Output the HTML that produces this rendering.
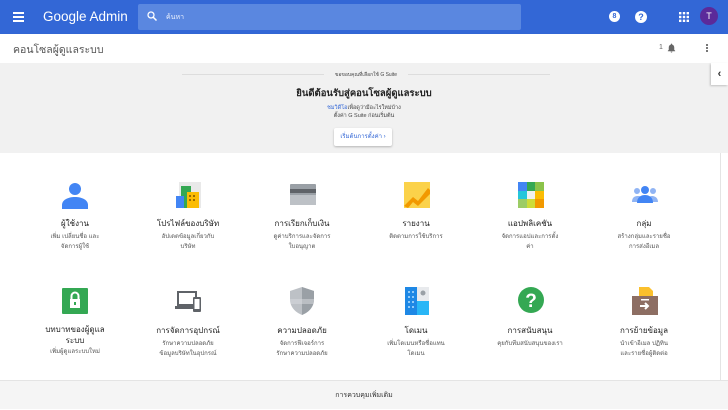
<!DOCTYPE html>
<html><head><meta charset="utf-8"><style>
*{margin:0;padding:0;box-sizing:border-box}
body{width:728px;height:409px;overflow:hidden;background:#fff;font-family:"Liberation Sans",sans-serif;position:relative;color:#333}
.abs{position:absolute}
.hdr{left:0;top:0;width:728px;height:34px;background:#3367d6}
.search{left:138px;top:4px;width:383px;height:26px;background:#5a87e0;border-radius:2px}
.sub{left:0;top:34px;width:728px;height:29px;background:#fff;box-shadow:0 1px 2px rgba(0,0,0,.15)}
.banner{left:0;top:63px;width:728px;height:90px;background:#f1f1f1}
.foot{left:0;top:380px;width:728px;height:29px;background:#f5f5f5;border-top:1px solid #e4e4e4;text-align:center;font-size:7px;line-height:29px;color:#333}
.item{position:absolute;width:110px;text-align:center}
.item .t{font-size:8px;color:#222;margin-top:0}
.item .d{font-size:6px;color:#555;line-height:10px;margin-top:2px;padding:0 26px}
.ic{position:absolute}
</style></head><body>
<div class="abs hdr"></div>
<div class="abs" style="left:13px;top:12px;width:11px;height:2px;background:#fff;box-shadow:0 4px 0 #fff,0 8px 0 #fff"></div>
<div class="abs" style="left:43px;top:9px;color:#fff;font-size:13.5px">Google Admin</div>
<div class="abs search"></div>
<svg class="abs" style="left:146px;top:10px" width="12" height="12" viewBox="0 0 24 24"><circle cx="10" cy="10" r="6" fill="none" stroke="#fff" stroke-width="2.5"/><path d="M14.5 14.5L21 21" stroke="#fff" stroke-width="3"/></svg>
<div class="abs" style="left:166px;top:12px;color:#e8eefc;font-size:7px">ค้นหา</div>
<div class="abs" style="left:609px;top:11px;width:11px;height:11px;border-radius:50%;background:#fff;color:#3367d6;font-size:7px;text-align:center;line-height:11px;font-weight:bold">8</div>
<div class="abs" style="left:635px;top:11px;width:12px;height:12px;border-radius:50%;background:#fff;color:#3367d6;font-size:9px;text-align:center;line-height:12px;font-weight:bold">?</div>
<svg class="abs" style="left:679px;top:12px" width="10" height="10"><g fill="#fff"><rect x="0" y="0" width="2.4" height="2.4"/><rect x="3.8" y="0" width="2.4" height="2.4"/><rect x="7.6" y="0" width="2.4" height="2.4"/><rect x="0" y="3.8" width="2.4" height="2.4"/><rect x="3.8" y="3.8" width="2.4" height="2.4"/><rect x="7.6" y="3.8" width="2.4" height="2.4"/><rect x="0" y="7.6" width="2.4" height="2.4"/><rect x="3.8" y="7.6" width="2.4" height="2.4"/><rect x="7.6" y="7.6" width="2.4" height="2.4"/></g></svg>
<div class="abs" style="left:700px;top:7px;width:18px;height:18px;border-radius:50%;background:#5b2a9a;color:#fff;font-size:9px;text-align:center;line-height:18px">T</div>
<div class="abs sub"></div>
<div class="abs" style="left:13px;top:41px;font-size:10.5px;color:#555">คอนโซลผู้ดูแลระบบ</div>
<div class="abs" style="left:659px;top:44px;font-size:7px;color:#666">1</div>
<svg class="abs" style="left:666px;top:42px" width="11" height="12" viewBox="0 0 24 24"><path d="M12 22a2 2 0 0 0 2-2h-4a2 2 0 0 0 2 2zm6-6V11c0-3-1.6-5.6-4.5-6.3V4a1.5 1.5 0 0 0-3 0v.7C7.6 5.4 6 8 6 11v5l-2 2v1h16v-1z" fill="#666"/></svg>
<div class="abs" style="left:706px;top:44px;width:2px;height:2px;background:#777;box-shadow:0 3px 0 #777,0 6px 0 #777"></div>
<div class="abs banner"></div>
<div class="abs" style="left:182px;top:74px;width:142px;height:1px;background:#ddd"></div>
<div class="abs" style="left:408px;top:74px;width:142px;height:1px;background:#ddd"></div>
<div class="abs" style="left:324px;top:71px;width:84px;text-align:center;font-size:5px;color:#444">ขอขอบคุณที่เลือกใช้ G Suite</div>
<div class="abs" style="left:214px;top:86px;width:300px;text-align:center;font-size:9.5px;color:#222;font-weight:bold">ยินดีต้อนรับสู่คอนโซลผู้ดูแลระบบ</div>
<div class="abs" style="left:214px;top:104px;width:300px;text-align:center;font-size:5.5px;color:#444;line-height:8px"><span style="color:#3367d6">ชมวิดีโอ</span>เพื่อดูว่ามีอะไรใหม่บ้าง<br>ตั้งค่า G Suite ก่อนเริ่มต้น</div>
<div class="abs" style="left:334px;top:128px;width:58px;height:18px;background:#fff;box-shadow:0 1px 2px rgba(0,0,0,.25);border-radius:2px;text-align:center;font-size:6px;line-height:18px;color:#3367d6">เริ่มต้นการตั้งค่า ›</div>
<div class="abs" style="left:711px;top:63px;width:17px;height:22px;background:#fff;box-shadow:-1px 1px 2px rgba(0,0,0,.2);font-size:11px;font-weight:bold;text-align:center;line-height:22px;color:#333">‹</div>
<div class="abs" style="left:720px;top:153px;width:1px;height:227px;background:#e4e4e4"></div>

<svg class="ic" style="left:61px;top:181px" width="28" height="28"><circle cx="14" cy="8" r="6" fill="#4285f4"/><path d="M1 28v-4c0-5 6-8 13-8s13 3 13 8v4z" fill="#4285f4"/></svg>
<svg class="ic" style="left:175px;top:182px" width="27" height="26"><rect x="4" y="0" width="22" height="26" fill="#e9e9e9"/><rect x="6" y="4" width="10" height="22" fill="#34a853"/><rect x="1" y="14" width="8" height="12" fill="#4285f4"/><rect x="12" y="10" width="12" height="16" fill="#fbbc04"/><g fill="#9a6a00"><rect x="14" y="13" width="2" height="2"/><rect x="18" y="13" width="2" height="2"/><rect x="14" y="17" width="2" height="2"/><rect x="18" y="17" width="2" height="2"/></g></svg>
<svg class="ic" style="left:290px;top:184px" width="26" height="22"><rect x="0" y="0" width="26" height="21" fill="#9aa0a6" rx="1"/><rect x="0" y="5" width="26" height="4" fill="#5f6368"/><rect x="0" y="11" width="26" height="10" fill="#bdc1c6"/></svg>
<svg class="ic" style="left:404px;top:182px" width="26" height="26"><rect width="26" height="26" fill="#fbd24a"/><path d="M0 24L9 15l5 4L24 6l2 2v4L14 24l-5-4-5 6z" fill="#f29900"/></svg>
<svg class="ic" style="left:518px;top:182px" width="26" height="26"><rect x="0" y="0" width="9" height="9" fill="#4285f4"/><rect x="9" y="0" width="8" height="9" fill="#34a853"/><rect x="17" y="0" width="9" height="9" fill="#8bc34a"/><rect x="0" y="9" width="9" height="8" fill="#26c6da"/><rect x="9" y="9" width="8" height="8" fill="#f1f1f1"/><rect x="17" y="9" width="9" height="8" fill="#fbbc04"/><rect x="0" y="17" width="9" height="9" fill="#9ccc65"/><rect x="9" y="17" width="8" height="9" fill="#cddc39"/><rect x="17" y="17" width="9" height="9" fill="#f29900"/></svg>
<svg class="ic" style="left:632px;top:185px" width="26" height="18"><circle cx="5" cy="6" r="3" fill="#90b4f4"/><circle cx="21" cy="6" r="3" fill="#90b4f4"/><path d="M0 17c0-5 3-6 6-6s5 1 5 6zM15 17c0-5 3-6 5-6s6 1 6 6z" fill="#90b4f4"/><circle cx="13" cy="5" r="4" fill="#4285f4"/><path d="M5 18c0-6 4-8 8-8s8 2 8 8z" fill="#4285f4"/></svg>

<div class="item" style="left:20px;top:217px"><div class="t">ผู้ใช้งาน</div><div class="d">เพิ่ม เปลี่ยนชื่อ และจัดการผู้ใช้</div></div>
<div class="item" style="left:133px;top:217px"><div class="t">โปรไฟล์ของบริษัท</div><div class="d">อัปเดตข้อมูลเกี่ยวกับบริษัท</div></div>
<div class="item" style="left:247px;top:217px"><div class="t">การเรียกเก็บเงิน</div><div class="d">ดูค่าบริการและจัดการใบอนุญาต</div></div>
<div class="item" style="left:361px;top:217px"><div class="t">รายงาน</div><div class="d">ติดตามการใช้บริการ</div></div>
<div class="item" style="left:475px;top:217px"><div class="t">แอปพลิเคชัน</div><div class="d">จัดการแอปและการตั้งค่า</div></div>
<div class="item" style="left:589px;top:217px"><div class="t">กลุ่ม</div><div class="d">สร้างกลุ่มและรายชื่อการส่งอีเมล</div></div>

<svg class="ic" style="left:62px;top:288px" width="26" height="26"><rect width="26" height="26" rx="1" fill="#34a853"/><rect x="8" y="11" width="10" height="9" fill="#fff"/><path d="M9.5 11V8a3.5 3.5 0 0 1 7 0v3" fill="none" stroke="#fff" stroke-width="2"/><rect x="12" y="14" width="2" height="3" fill="#34a853"/></svg>
<svg class="ic" style="left:175px;top:291px" width="28" height="22"><rect x="2" y="0" width="20" height="15" fill="#5f6368"/><rect x="4" y="2" width="16" height="11" fill="#fff"/><rect x="0" y="15" width="22" height="3" fill="#5f6368"/><rect x="18" y="6" width="8" height="15" rx="1" fill="#5f6368"/><rect x="19.5" y="8" width="5" height="10" fill="#fff"/></svg>
<svg class="ic" style="left:290px;top:287px" width="24" height="28"><path d="M12 0L0 4v8c0 8 5 13 12 16 7-3 12-8 12-16V4z" fill="#bdc1c6"/><path d="M12 0v28c7-3 12-8 12-16V4z" fill="#9aa0a6"/><path d="M0 12h24c0 2-.3 4-1 5H1c-.7-1-1-3-1-5z" fill="#dadce0" opacity=".5"/></svg>
<svg class="ic" style="left:405px;top:287px" width="24" height="28"><rect width="24" height="28" fill="#1e88e5"/><rect x="12" y="0" width="12" height="28" fill="#e8eaed"/><rect x="12" y="14" width="12" height="14" fill="#29b6f6"/><circle cx="18" cy="6" r="2.5" fill="#9aa0a6"/><g fill="#90caf9"><rect x="3" y="4" width="2" height="2"/><rect x="7" y="4" width="2" height="2"/><rect x="3" y="9" width="2" height="2"/><rect x="7" y="9" width="2" height="2"/><rect x="3" y="14" width="2" height="2"/><rect x="7" y="14" width="2" height="2"/><rect x="3" y="19" width="2" height="2"/><rect x="7" y="19" width="2" height="2"/></g></svg>
<svg class="ic" style="left:518px;top:287px" width="26" height="26"><circle cx="13" cy="13" r="13" fill="#34a853"/><text x="13" y="20" text-anchor="middle" font-family="Liberation Sans" font-weight="bold" font-size="19" fill="#fff">?</text></svg>
<svg class="ic" style="left:632px;top:287px" width="26" height="28"><path d="M7 0h10l4 4v8H7z" fill="#fbc02d"/><rect x="0" y="9" width="26" height="19" fill="#8d6e63"/><rect x="9" y="12" width="8" height="1.5" fill="#fff"/><path d="M8 19h8M13 16l3 3-3 3" stroke="#fff" stroke-width="2" fill="none"/></svg>

<div class="item" style="left:20px;top:324px"><div class="t" style="line-height:11px;padding:0 24px">บทบาทของผู้ดูแลระบบ</div><div class="d" style="margin-top:1px;padding:0 20px">เพิ่มผู้ดูแลระบบใหม่</div></div>
<div class="item" style="left:133px;top:324px"><div class="t">การจัดการอุปกรณ์</div><div class="d">รักษาความปลอดภัยข้อมูลบริษัทในอุปกรณ์</div></div>
<div class="item" style="left:247px;top:324px"><div class="t">ความปลอดภัย</div><div class="d">จัดการฟีเจอร์การรักษาความปลอดภัย</div></div>
<div class="item" style="left:361px;top:324px"><div class="t">โดเมน</div><div class="d">เพิ่มโดเมนหรือชื่อแทนโดเมน</div></div>
<div class="item" style="left:475px;top:324px"><div class="t">การสนับสนุน</div><div class="d" style="padding:0 15px">คุยกับทีมสนับสนุนของเรา</div></div>
<div class="item" style="left:589px;top:324px"><div class="t">การย้ายข้อมูล</div><div class="d">นำเข้าอีเมล ปฏิทิน และรายชื่อผู้ติดต่อ</div></div>

<div class="abs foot">การควบคุมเพิ่มเติม</div>
</body></html>
